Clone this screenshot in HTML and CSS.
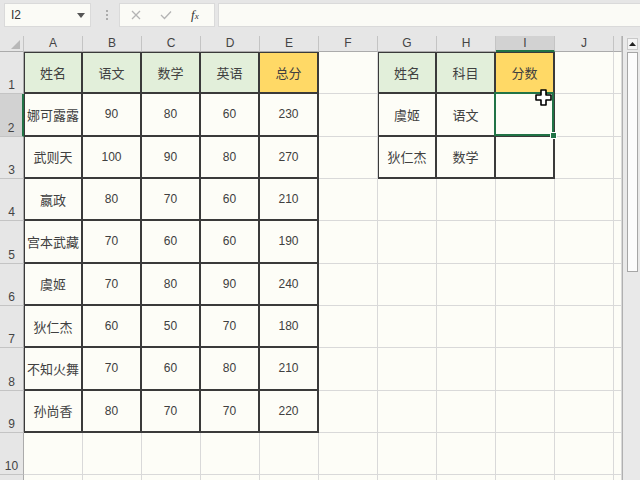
FILE: index.html
```html
<!DOCTYPE html>
<html lang="zh-CN">
<head>
  <meta charset="UTF-8">
  <title>成绩表</title>
  <link rel="stylesheet" href="styles.css">
</head>
<body>
  <!-- Formula bar -->
  <div class="topbar">
    <div class="namebox">
      <span>I2</span>
      <svg class="drop" width="8" height="5" viewBox="0 0 8 5"><path d="M0 0H8L4 5Z" fill="#555"/></svg>
    </div>
    <svg class="grip" width="4" height="12" viewBox="0 0 4 12"><circle cx="2" cy="2" r="1" fill="#999"/><circle cx="2" cy="6" r="1" fill="#999"/><circle cx="2" cy="10" r="1" fill="#999"/></svg>
    <div class="fxbox">
      <svg width="10" height="10" viewBox="0 0 10 10"><path d="M1 1L9 9M9 1L1 9" stroke="#b4b4b4" stroke-width="1.3"/></svg>
      <svg width="12" height="10" viewBox="0 0 12 10"><path d="M1 5L4.5 8.5L11 1.5" stroke="#b4b4b4" stroke-width="1.3" fill="none"/></svg>
      <i class="fx">f<small>x</small></i>
    </div>
    <div class="formula"></div>
  </div>

  <div class="sheet">
    <div class="grid">
      <!-- column headers -->
      <div class="corner"><svg width="9" height="9" viewBox="0 0 9 9"><path d="M9 0V9H0Z" fill="#b8b8b8"/></svg></div>
      <div class="ch">A</div><div class="ch">B</div><div class="ch">C</div><div class="ch">D</div><div class="ch">E</div>
      <div class="ch">F</div><div class="ch">G</div><div class="ch">H</div><div class="ch sel">I</div><div class="ch">J</div><div class="ch"></div>

      <!-- row 1 -->
      <div class="rh">1</div>
      <div class="c t l tp g">姓名</div><div class="c t tp g">语文</div><div class="c t tp g">数学</div><div class="c t tp g">英语</div><div class="c t tp y">总分</div>
      <div class="c"></div>
      <div class="c t l tp g">姓名</div><div class="c t tp g">科目</div><div class="c t tp y">分数</div>
      <div class="c"></div><div class="c"></div>

      <!-- row 2 -->
      <div class="rh sel">2</div>
      <div class="c t l">娜可露露</div><div class="c t n">90</div><div class="c t n">80</div><div class="c t n">60</div><div class="c t n">230</div>
      <div class="c"></div>
      <div class="c t l">虞姬</div><div class="c t">语文</div>
      <div class="c t active">
        <svg class="cursor" width="17" height="17" viewBox="0 0 17 17"><path d="M6 1H11V6H16V11H11V16H6V11H1V6H6Z" fill="#fff" stroke="#000" stroke-width="1.6" stroke-linejoin="round"/></svg>
      </div>
      <div class="c"></div><div class="c"></div>

      <!-- row 3 -->
      <div class="rh">3</div>
      <div class="c t l">武则天</div><div class="c t n">100</div><div class="c t n">90</div><div class="c t n">80</div><div class="c t n">270</div>
      <div class="c"></div>
      <div class="c t l">狄仁杰</div><div class="c t">数学</div><div class="c t"></div>
      <div class="c"></div><div class="c"></div>

      <!-- row 4 -->
      <div class="rh">4</div>
      <div class="c t l">嬴政</div><div class="c t n">80</div><div class="c t n">70</div><div class="c t n">60</div><div class="c t n">210</div>
      <div class="c"></div><div class="c"></div><div class="c"></div><div class="c"></div><div class="c"></div><div class="c"></div>

      <!-- row 5 -->
      <div class="rh">5</div>
      <div class="c t l">宫本武藏</div><div class="c t n">70</div><div class="c t n">60</div><div class="c t n">60</div><div class="c t n">190</div>
      <div class="c"></div><div class="c"></div><div class="c"></div><div class="c"></div><div class="c"></div><div class="c"></div>

      <!-- row 6 -->
      <div class="rh">6</div>
      <div class="c t l">虞姬</div><div class="c t n">70</div><div class="c t n">80</div><div class="c t n">90</div><div class="c t n">240</div>
      <div class="c"></div><div class="c"></div><div class="c"></div><div class="c"></div><div class="c"></div><div class="c"></div>

      <!-- row 7 -->
      <div class="rh">7</div>
      <div class="c t l">狄仁杰</div><div class="c t n">60</div><div class="c t n">50</div><div class="c t n">70</div><div class="c t n">180</div>
      <div class="c"></div><div class="c"></div><div class="c"></div><div class="c"></div><div class="c"></div><div class="c"></div>

      <!-- row 8 -->
      <div class="rh">8</div>
      <div class="c t l">不知火舞</div><div class="c t n">70</div><div class="c t n">60</div><div class="c t n">80</div><div class="c t n">210</div>
      <div class="c"></div><div class="c"></div><div class="c"></div><div class="c"></div><div class="c"></div><div class="c"></div>

      <!-- row 9 -->
      <div class="rh">9</div>
      <div class="c t l">孙尚香</div><div class="c t n">80</div><div class="c t n">70</div><div class="c t n">70</div><div class="c t n">220</div>
      <div class="c"></div><div class="c"></div><div class="c"></div><div class="c"></div><div class="c"></div><div class="c"></div>

      <!-- row 10 -->
      <div class="rh">10</div>
      <div class="c"></div><div class="c"></div><div class="c"></div><div class="c"></div><div class="c"></div>
      <div class="c"></div><div class="c"></div><div class="c"></div><div class="c"></div><div class="c"></div><div class="c"></div>

      <!-- row 11, only its top edge shows -->
      <div class="rh"></div>
      <div class="c"></div><div class="c"></div><div class="c"></div><div class="c"></div><div class="c"></div>
      <div class="c"></div><div class="c"></div><div class="c"></div><div class="c"></div><div class="c"></div><div class="c"></div>
    </div>

    <!-- vertical scrollbar -->
    <div class="vscroll">
      <div class="arrow"><svg width="7" height="4" viewBox="0 0 7 4"><path d="M0 4H7L3.5 0Z" fill="#222"/></svg></div>
      <div class="thumb"></div>
    </div>
  </div>
</body>
</html>
```

FILE: styles.css
```css
body {
  margin: 0;
  overflow: hidden;
  background: #e6e6e6;
  font-family: "Liberation Sans", "Noto Sans CJK SC", sans-serif;
  color: #404040;
}

/* formula bar */
.topbar {
  height: 36px;
  box-sizing: border-box;
  padding: 3px 0 0 4px;
  display: flex;
  align-items: flex-start;
}
.namebox {
  width: 87px;
  height: 24px;
  box-sizing: border-box;
  background: #fbfbf6;
  border: 1px solid #dadada;
  display: flex;
  align-items: center;
  justify-content: space-between;
  padding: 0 5px 0 6px;
  font-size: 12px;
  color: #333;
}
.grip {
  margin: 6px 0 0 14px;
}
.fxbox {
  width: 96px;
  height: 24px;
  box-sizing: border-box;
  margin-left: 10px;
  background: #fbfbf6;
  border: 1px solid #dadada;
  display: flex;
  align-items: center;
  gap: 19px;
  padding-left: 11px;
}
.fx {
  font-family: "Liberation Serif", serif;
  font-size: 13px;
  color: #333;
}
.fx small {
  font-size: 9px;
}
.formula {
  flex: 1;
  height: 24px;
  box-sizing: border-box;
  margin-left: 3px;
  background: #fbfbf6;
  border: 1px solid #dadada;
  border-right: none;
}

/* sheet */
.sheet {
  display: flex;
  height: 444px;
}
.grid {
  width: 622px;
  flex: none;
  display: grid;
  grid-template-columns: 24px repeat(10, 59px) 8px;
  grid-template-rows: 16px repeat(10, 42.33px) 20px;
  overflow: hidden;
}
.grid > div {
  box-sizing: border-box;
  min-width: 0;
}
.corner {
  background: #e6e6e6;
  border-right: 1px solid #c4c4c4;
  border-bottom: 1px solid #ababab;
  display: flex;
  align-items: flex-end;
  justify-content: flex-end;
  padding: 0 3px 2px 0;
}
.ch {
  background: #e6e6e6;
  border-right: 1px solid #c4c4c4;
  border-bottom: 1px solid #ababab;
  font-size: 12px;
  line-height: 15px;
  text-align: center;
  color: #444;
}
.ch.sel {
  background: #d2d2d2;
  border-bottom: 2px solid #217346;
}
.rh {
  background: #e6e6e6;
  border-right: 1px solid #ababab;
  border-bottom: 1px solid #c4c4c4;
  font-size: 12px;
  color: #444;
  display: flex;
  align-items: flex-end;
  justify-content: center;
  padding-bottom: 1px;
}
.rh.sel {
  background: #d2d2d2;
  border-right: 2px solid #217346;
}

/* cells */
.c {
  background: #fdfdf7;
  border-right: 1px solid #d9d9d9;
  border-bottom: 1px solid #d9d9d9;
  display: flex;
  align-items: center;
  justify-content: center;
  font-size: 13px;
  white-space: nowrap;
}
.c.n {
  font-size: 12px;
}
.c.t {
  border-right: 2px solid #3a3a3a;
  border-bottom: 2px solid #3a3a3a;
}
.c.l {
  border-left: 1px solid #3a3a3a;
}
.c.tp {
  border-top: 1px solid #3a3a3a;
}
.c.g {
  background: #e2efda;
}
.c.y {
  background: #ffd966;
}

/* selected cell */
.active {
  position: relative;
}
.active::after {
  content: "";
  position: absolute;
  top: -2px;
  left: -2px;
  right: -1px;
  bottom: -1px;
  border: 2px solid #217346;
}
.active::before {
  content: "";
  position: absolute;
  right: -4px;
  bottom: -4px;
  width: 5px;
  height: 5px;
  background: #217346;
  border: 1px solid #fff;
  z-index: 2;
}
.cursor {
  position: absolute;
  top: -5px;
  left: 39px;
  z-index: 3;
}

/* scrollbar */
.vscroll {
  flex: 1;
  background: #e9e9e9;
  border-left: 1px solid #b0b0b0;
  padding: 2px 2px 0 4px;
}
.arrow {
  height: 12px;
  background: #f4f4f4;
  border: 1px solid #c8c8c8;
  box-sizing: border-box;
  display: flex;
  align-items: center;
  justify-content: center;
}
.thumb {
  height: 220px;
  margin-top: 2px;
  background: #fcfcfc;
  border: 1px solid #a6a6a6;
  box-sizing: border-box;
}
```
